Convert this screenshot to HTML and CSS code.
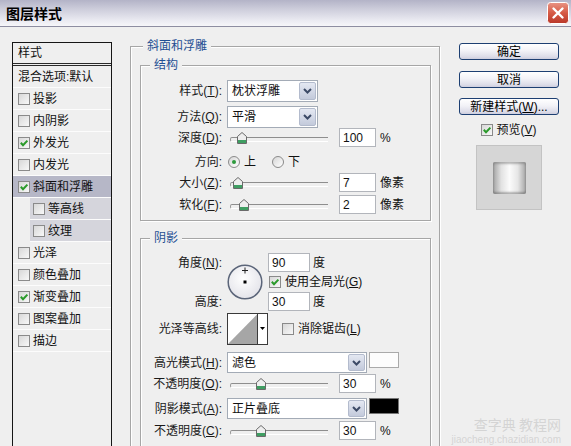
FILE: index.html
```html
<!DOCTYPE html>
<html>
<head>
<meta charset="utf-8">
<link rel="stylesheet" href="styles.css">
</head>
<body>
<div class="win">
  <div class="titlebar">
    <span class="title">图层样式</span>
    <svg class="close" width="22" height="22" viewBox="0 0 22 22">
      <defs><linearGradient id="cg" x1="0" y1="0" x2="0" y2="1"><stop offset="0" stop-color="#e99585"/><stop offset="0.5" stop-color="#d65a45"/><stop offset="1" stop-color="#b9382a"/></linearGradient></defs>
      <rect x="0.5" y="0.5" width="21" height="21" rx="3" fill="url(#cg)" stroke="#fff"/>
      <path d="M6.5 6.5 L15.5 15.5 M15.5 6.5 L6.5 15.5" stroke="#fff" stroke-width="2.4" stroke-linecap="round"/>
    </svg>
  </div>
  <div class="main">
    <div class="list">
      <div class="lhead">样式</div>
      <div class="item">混合选项:默认</div>
      <div class="item"><span class="cb"></span>投影</div>
      <div class="item"><span class="cb"></span>内阴影</div>
      <div class="item"><span class="cb"><svg width="10" height="10" viewBox="0 0 10 10"><path d="M1.8 4.8 L4 7.2 L8.4 2.6" fill="none" stroke="#2a9a2a" stroke-width="2"/></svg></span>外发光</div>
      <div class="item"><span class="cb"></span>内发光</div>
      <div class="item selrow"><span class="cb"><svg width="10" height="10" viewBox="0 0 10 10"><path d="M1.8 4.8 L4 7.2 L8.4 2.6" fill="none" stroke="#2a9a2a" stroke-width="2"/></svg></span>斜面和浮雕</div>
      <div class="item sub"><span class="cb"></span>等高线</div>
      <div class="item sub"><span class="cb"></span>纹理</div>
      <div class="item"><span class="cb"></span>光泽</div>
      <div class="item"><span class="cb"></span>颜色叠加</div>
      <div class="item"><span class="cb"><svg width="10" height="10" viewBox="0 0 10 10"><path d="M1.8 4.8 L4 7.2 L8.4 2.6" fill="none" stroke="#2a9a2a" stroke-width="2"/></svg></span>渐变叠加</div>
      <div class="item"><span class="cb"></span>图案叠加</div>
      <div class="item"><span class="cb"></span>描边</div>
    </div>

    <div class="outer">
      <span class="legend">斜面和浮雕</span>
      <div class="grp struct">
        <span class="legend legend-in">结构</span>
        <div class="row">
          <span class="lbl">样式(<u>T</u>):</span>
          <div class="select w91 h22"><span>枕状浮雕</span><span class="dd"><svg width="9" height="6" viewBox="0 0 9 6"><path d="M1 1 L4.5 4.5 L8 1" fill="none" stroke="#3c4a66" stroke-width="2"/></svg></span></div>
        </div>
        <div class="row g5">
          <span class="lbl">方法(<u>Q</u>):</span>
          <div class="select w91 h22"><span>平滑</span><span class="dd"><svg width="9" height="6" viewBox="0 0 9 6"><path d="M1 1 L4.5 4.5 L8 1" fill="none" stroke="#3c4a66" stroke-width="2"/></svg></span></div>
        </div>
        <div class="row">
          <span class="lbl">深度(<u>D</u>):</span>
          <div class="slider"><svg class="thumb" style="left:9px" width="10" height="12" viewBox="0 0 10 12"><path d="M0.5 4.5 L5 0.5 L9.5 4.5 L9.5 11.5 L0.5 11.5 Z" fill="#eeeeee" stroke="#6a6a6a"/><rect x="1" y="8" width="8" height="3" fill="#3f9e62"/></svg></div>
          <div class="num">100</div><span class="unit">%</span>
        </div>
        <div class="row g3">
          <span class="lbl">方向:</span>
          <span class="radio on"></span><span>上</span>
          <span class="radio r2"></span><span>下</span>
        </div>
        <div class="row">
          <span class="lbl">大小(<u>Z</u>):</span>
          <div class="slider"><svg class="thumb" style="left:5px" width="10" height="12" viewBox="0 0 10 12"><path d="M0.5 4.5 L5 0.5 L9.5 4.5 L9.5 11.5 L0.5 11.5 Z" fill="#eeeeee" stroke="#6a6a6a"/><rect x="1" y="8" width="8" height="3" fill="#3f9e62"/></svg></div>
          <div class="num">7</div><span class="unit">像素</span>
        </div>
        <div class="row g1">
          <span class="lbl">软化(<u>F</u>):</span>
          <div class="slider"><svg class="thumb" style="left:11px" width="10" height="12" viewBox="0 0 10 12"><path d="M0.5 4.5 L5 0.5 L9.5 4.5 L9.5 11.5 L0.5 11.5 Z" fill="#eeeeee" stroke="#6a6a6a"/><rect x="1" y="8" width="8" height="3" fill="#3f9e62"/></svg></div>
          <div class="num">2</div><span class="unit">像素</span>
        </div>
      </div>

      <div class="grp shadow">
        <span class="legend legend-in">阴影</span>
        <div class="angle">
          <span class="lbl a1">角度(<u>N</u>):</span>
          <svg class="dial" width="36" height="36" viewBox="0 0 36 36">
            <defs><radialGradient id="dg" cx="0.45" cy="0.4" r="0.6"><stop offset="0" stop-color="#ffffff"/><stop offset="1" stop-color="#e4e4ea"/></radialGradient></defs>
            <circle cx="18" cy="18" r="16.8" fill="url(#dg)" stroke="#5b6579" stroke-width="1.5"/>
            <path d="M18 3.5 V9.5 M15 6.5 H21" stroke="#222" stroke-width="1"/>
            <rect x="16.5" y="16.5" width="3" height="3" fill="#000"/>
          </svg>
          <div class="a2"><div class="num w42">90</div><span class="unit u3">度</span></div>
          <div class="a3"><span class="cb"><svg width="10" height="10" viewBox="0 0 10 10"><path d="M1.8 4.8 L4 7.2 L8.4 2.6" fill="none" stroke="#2a9a2a" stroke-width="2"/></svg></span><span>使用全局光(<u>G</u>)</span></div>
          <span class="lbl a4">高度:</span>
          <div class="a5"><div class="num w42">30</div><span class="unit u3">度</span></div>
        </div>
        <div class="row contour-row">
          <span class="lbl">光泽等高线:</span>
          <svg class="contour" width="41" height="32" viewBox="0 0 41 32">
            <rect x="0.5" y="0.5" width="40" height="31" fill="#fff" stroke="#3a3a3a"/>
            <polygon points="1,31 30.5,1 30.5,31" fill="#a6a6a6"/>
            <path d="M30.5 1 V31" stroke="#3a3a3a"/>
            <polygon points="33,14 38,14 35.5,17" fill="#000"/>
          </svg>
          <span class="cb cb-aa"></span><span>消除锯齿(<u>L</u>)</span>
        </div>
        <div class="row g7">
          <span class="lbl">高光模式(<u>H</u>):</span>
          <div class="select w140 h21"><span>滤色</span><span class="dd"><svg width="9" height="6" viewBox="0 0 9 6"><path d="M1 1 L4.5 4.5 L8 1" fill="none" stroke="#3c4a66" stroke-width="2"/></svg></span></div>
          <span class="swatch white"></span>
        </div>
        <div class="row g1 h19">
          <span class="lbl">不透明度(<u>O</u>):</span>
          <div class="slider"><svg class="thumb" style="left:28px" width="10" height="12" viewBox="0 0 10 12"><path d="M0.5 4.5 L5 0.5 L9.5 4.5 L9.5 11.5 L0.5 11.5 Z" fill="#eeeeee" stroke="#6a6a6a"/><rect x="1" y="8" width="8" height="3" fill="#3f9e62"/></svg></div>
          <div class="num">30</div><span class="unit">%</span>
        </div>
        <div class="row g5">
          <span class="lbl">阴影模式(<u>A</u>):</span>
          <div class="select w140 h21"><span>正片叠底</span><span class="dd"><svg width="9" height="6" viewBox="0 0 9 6"><path d="M1 1 L4.5 4.5 L8 1" fill="none" stroke="#3c4a66" stroke-width="2"/></svg></span></div>
          <span class="swatch black"></span>
        </div>
        <div class="row g2 h19">
          <span class="lbl">不透明度(<u>C</u>):</span>
          <div class="slider"><svg class="thumb" style="left:28px" width="10" height="12" viewBox="0 0 10 12"><path d="M0.5 4.5 L5 0.5 L9.5 4.5 L9.5 11.5 L0.5 11.5 Z" fill="#eeeeee" stroke="#6a6a6a"/><rect x="1" y="8" width="8" height="3" fill="#3f9e62"/></svg></div>
          <div class="num">30</div><span class="unit">%</span>
        </div>
      </div>
    </div>

    <div class="side">
      <div class="btn">确定</div>
      <div class="btn b2">取消</div>
      <div class="btn b3">新建样式(<u>W</u>)...</div>
      <div class="prev"><span class="cb"><svg width="10" height="10" viewBox="0 0 10 10"><path d="M1.8 4.8 L4 7.2 L8.4 2.6" fill="none" stroke="#2a9a2a" stroke-width="2"/></svg></span><span>预览(<u>V</u>)</span></div>
      <div class="pbox"><div class="pillow"></div></div>
    </div>
  </div>
  <div class="wm"><span class="wm1">查字典 教程网</span><span class="wm2">jiaocheng.chazidian.com</span></div>
</div>
</body>
</html>
```

FILE: styles.css
```css
* { box-sizing: border-box; }
html, body { margin: 0; padding: 0; }
body {
  width: 571px; height: 446px; overflow: hidden;
  background: #efefef;
  font-family: "Liberation Sans", "Noto Sans CJK SC", sans-serif;
  font-size: 12px; line-height: 14px; color: #111;
}
u { text-decoration: underline; text-underline-offset: 1px; }
.win { position: relative; width: 571px; height: 446px; overflow: hidden; background: #efefef; }

.titlebar {
  height: 27px; display: flex; align-items: center; justify-content: space-between;
  padding: 0 2px 0 6px;
  background: linear-gradient(#b3b3c7, #cdcddb 35%, #ebebf2 80%, #f6f6f9);
  border-bottom: 1px solid #8d8da1;
}
.title { font-family: "Noto Sans CJK SC", sans-serif; font-weight: bold; font-size: 14px; line-height: 16px; color: #000; }
.close { display: block; }

.main { display: flex; align-items: flex-start; padding-left: 12px; height: 419px; }

/* style list */
.list { flex: none; width: 100px; height: 430px; margin-top: 15px; border: 1px solid #161616; background: #efefef; }
.lhead { height: 23px; border-bottom: 3px double #2a2a2a; padding-left: 5px; display: flex; align-items: center; }
.item { height: 22px; display: flex; align-items: center; padding-left: 5px; border-bottom: 1px solid #fcfcfc; white-space: nowrap; }
.item.selrow { background: #b6b7c7; }
.item.sub { margin-left: 17px; padding-left: 3px; background: #d5d5dc; }

.cb {
  flex: none; width: 12px; height: 12px; margin-right: 3px;
  border: 1px solid #8a8a8a;
  background: linear-gradient(135deg, #d8d8d8, #f8f8f8);
  display: flex; align-items: center; justify-content: center;
}
.cb svg { display: block; }

/* groups */
.outer {
  flex: none; position: relative; width: 310px; height: 420px;
  margin-left: 18px; margin-top: 19px;
  padding: 18px 8px 0 9px;
  border: 1px solid #a6a6a6;
  box-shadow: inset 1px 1px 0 #fff, 1px 1px 0 #fff;
}
.legend {
  position: absolute; top: -8px; left: 12px; padding: 0 4px;
  background: #efefef; color: #1f4f93; line-height: 14px; white-space: nowrap;
}
.legend-in { left: 9px; }
.grp {
  position: relative;
  border: 1px solid #a6a6a6;
  box-shadow: inset 1px 1px 0 #fff, 1px 1px 0 #fff;
}
.struct { padding: 14px 0 5px 0; }
.shadow { margin-top: 17px; height: 260px; padding-top: 14px; }

.row { display: flex; align-items: center; height: 21px; white-space: nowrap; }
.row.h19 { height: 19px; }
.g1 { margin-top: 1px; } .g2 { margin-top: 2px; } .g3 { margin-top: 3px; }
.g5 { margin-top: 5px; } .g7 { margin-top: 7px; }

.lbl { flex: none; width: 81px; margin-right: 5px; text-align: right; white-space: nowrap; color: #1a1a1a; }

.select {
  flex: none; display: flex; align-items: center; justify-content: space-between;
  border: 1px solid #a3abb6; background: #fff; padding-left: 4px;
}
.w91 { width: 91px; } .w140 { width: 140px; }
.h22 { height: 22px; } .h21 { height: 21px; }
.dd {
  width: 17px; height: calc(100% - 2px); margin-right: 1px;
  border: 1px solid #b3bbcd; border-radius: 2px;
  background: linear-gradient(#e4e8f2, #c3cadb);
  display: flex; align-items: center; justify-content: center;
}
.dd svg { display: block; }

.slider { flex: none; position: relative; width: 101px; height: 14px; margin-left: 1px; }
.slider::before {
  content: ""; position: absolute; left: 2px; top: 6px; width: 97px; height: 3px;
  border-top: 1px solid #8e8e8e; border-bottom: 1px solid #fff; border-left: 1px solid #9a9a9a;
  border-radius: 2px 0 0 2px;
}
.thumb { position: absolute; top: 1px; display: block; }

.num {
  flex: none; width: 37px; height: 19px; margin-left: 10px;
  border: 1px solid #b2b5bb; background: #fff; padding-left: 3px;
  display: flex; align-items: center;
}
.num.w42 { width: 42px; margin-left: 0; }
.unit { margin-left: 4px; }
.unit.u3 { margin-left: 3px; }

.radio {
  flex: none; width: 12px; height: 12px; border-radius: 50%;
  border: 1px solid #8a8a8a; background: linear-gradient(135deg, #d6d6d6, #fff);
  margin-left: 1px; margin-right: 4px; position: relative;
}
.radio.on::after {
  content: ""; position: absolute; left: 3px; top: 3px; width: 4px; height: 4px;
  border-radius: 50%; background: #2c9a3c;
}
.radio.r2 { margin-left: 16px; }

.angle {
  display: grid;
  grid-template-columns: 81px 36px 1fr;
  grid-template-rows: 19px 20px 19px;
  column-gap: 5px;
}
.angle .lbl { width: auto; margin-right: 0; display: flex; align-items: center; justify-content: flex-end; }
.a1 { grid-column: 1; grid-row: 1; }
.a4 { grid-column: 1; grid-row: 3; }
.dial { grid-column: 2; grid-row: 1 / 4; align-self: center; display: block; }
.a2 { grid-column: 3; grid-row: 1; display: flex; align-items: center; }
.a3 { grid-column: 3; grid-row: 2; display: flex; align-items: center; padding-left: 1px; }
.a3 .cb { margin-right: 4px; }
.a5 { grid-column: 3; grid-row: 3; display: flex; align-items: center; }

.contour-row { height: 32px; margin-top: 2px; }
.contour { flex: none; display: block; }
.cb-aa { margin-left: 14px; margin-right: 4px; }

.swatch { flex: none; align-self: flex-start; width: 30px; height: 16px; margin-left: 2px; border: 1px solid #a9a9a9; }
.swatch.white { background: #fcfcfc; }
.swatch.black { background: #000; border-color: #777; }

/* right side */
.side { flex: none; width: 100px; margin-left: 19px; margin-top: 16px; display: flex; flex-direction: column; align-items: center; }
.btn {
  width: 100px; height: 17px;
  border: 1px solid #1d3f72; border-radius: 3px;
  background: linear-gradient(#ffffff, #f2f2f7 45%, #dcdce8 85%, #cdcddd);
  display: flex; align-items: center; justify-content: center; white-space: nowrap; color: #000;
}
.btn.b2 { margin-top: 11px; }
.btn.b3 { margin-top: 10px; }
.prev { display: flex; align-items: center; height: 12px; margin-top: 9px; white-space: nowrap; }
.prev .cb { margin-right: 3px; }
.pbox {
  width: 66px; height: 65px; margin-top: 9px;
  background: #d6d6d6; border: 1px solid #c3c3c3;
  display: flex; align-items: center; justify-content: center;
}
.pillow {
  width: 33px; height: 32px; border-radius: 2px;
  background: linear-gradient(to right, #a2a2a2, #e2e2e2 25%, #fbfbfb 50%, #e6e6e6 75%, #a4a4a4);
  box-shadow: inset 0 2px 2px rgba(120,120,120,.5), inset 0 -2px 2px rgba(90,90,90,.45);
}

/* watermark overlay */
.wm { position: absolute; right: 10px; bottom: 1px; display: flex; flex-direction: column; align-items: flex-end; gap: 2px; color: rgba(185,185,185,.5); }
.wm1 { font-family: "Noto Sans CJK SC", sans-serif; font-size: 14px; line-height: 15px; }
.wm2 { font-size: 10px; line-height: 11px; }
```
